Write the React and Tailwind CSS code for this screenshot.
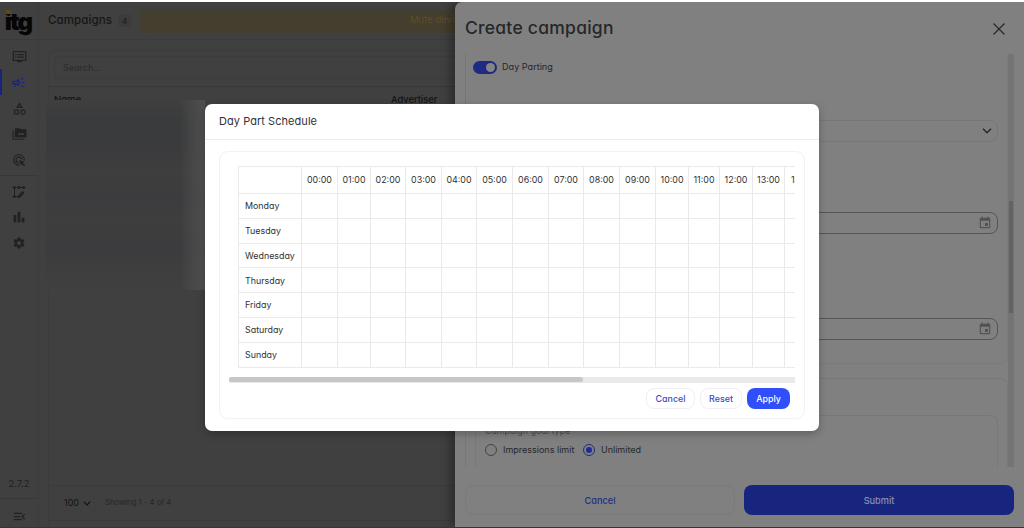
import React from "react";
import {
  MdOutlineDvr,
  MdOutlineCampaign,
  MdOutlineCategory,
  MdAdsClick,
  MdBarChart,
  MdSettings,
  MdMenuOpen,
  MdEvent,
} from "react-icons/md";

const HOURS = ["00:00", "01:00", "02:00", "03:00", "04:00", "05:00", "06:00", "07:00", "08:00", "09:00", "10:00", "11:00", "12:00", "13:00", "14:00"];
const DAYS = ["Monday", "Tuesday", "Wednesday", "Thursday", "Friday", "Saturday", "Sunday"];
const COLS =
  "grid grid-cols-[63px_36px_33px_35px_36px_35px_36px_36px_35px_36px_36px_33px_31px_33px_32px_36px]";

function Chevron({ className }) {
  return (
    <svg viewBox="0 0 10 6" className={className} fill="none" stroke="currentColor" strokeWidth="1.4">
      <path d="M1 .8 5 4.8 9 .8" />
    </svg>
  );
}

function PathEdit() {
  return (
    <svg viewBox="0 0 14 14" className="size-[14px]" fill="currentColor">
      <path d="M2.5 3v8M3 2.5h8.5M3 11.5h3" fill="none" stroke="currentColor" strokeWidth="1" />
      <circle cx="2.3" cy="2.4" r="1.5" />
      <circle cx="7" cy="2.5" r="1.4" />
      <circle cx="11.7" cy="2.4" r="1.5" />
      <circle cx="2.3" cy="11.6" r="1.5" />
      <path d="M5.6 13v-2l5-5 2 2-5 5z" />
    </svg>
  );
}

function MediaFolders() {
  return (
    <svg viewBox="0 0 24 24" className="h-[14px] w-[15px]" fill="currentColor">
      <path d="M2 6H0v14c0 1.100.9 2 2 2h18v-2H2z" />
      <path
        fillRule="evenodd"
        d="M22 4h-8l-2-2H6c-1.100 0-2 .9-2 2v12c0 1.100.9 2 2 2h16c1.100 0 2-.9 2-2V6c0-1.100-.9-2-2-2zM9 13.500l3-4 2.300 2.800L17.500 9l3 4.500z"
      />
    </svg>
  );
}

function Sidebar() {
  const item = "flex h-[26px] w-full items-center justify-center";
  return (
    <nav className="flex w-[39px] shrink-0 flex-col border-r border-[#3c3c3c] text-[#212121]">
      <div className="flex h-[38px] items-center justify-center border-b border-[#3a3a3a]">
        <div className="relative mt-[4px] ml-[-2px] h-[25px] text-[24px] leading-[23px] font-black tracking-[-1.8px] text-[#060606]">
          itg
          <span className="absolute top-[0px] left-[1px] h-[4px] w-[5px] bg-[#5b4a1c]" />
        </div>
      </div>
      <div className="flex flex-col pt-[3px]">
        <div className={item}><MdOutlineDvr className="size-[15px]" /></div>
        <div className="flex h-[26px] w-full items-center border-l-2 border-[#19257c] text-[#19257c]">
          <MdOutlineCampaign className="ml-[9px] size-[15px]" />
        </div>
        <div className={item}><MdOutlineCategory className="size-[15px]" /></div>
        <div className={item}><MediaFolders /></div>
        <div className={item}><MdAdsClick className="size-[14px]" /></div>
        <div className="mt-[2px] flex h-[29px] items-end justify-center border-t border-[#383838] pb-[5px]"><PathEdit /></div>
        <div className={item}><MdBarChart className="size-[16px]" /></div>
        <div className={item}><MdSettings className="size-[14px]" /></div>
      </div>
      <div className="mt-auto flex h-[27px] items-center justify-center border-b border-[#383838] pb-[1px] text-[9.5px]">2.7.2</div>
      <div className="flex h-[28px] items-center justify-center pt-[6px]"><MdMenuOpen className="size-[15px]" /></div>
    </nav>
  );
}

function CampaignList() {
  return (
    <main className="flex w-[416px] shrink-0 flex-col overflow-hidden">
      <header className="flex h-[38px] shrink-0 items-center border-b border-[#3b3b3b] pl-[9px]">
        <h1 className="text-[11.5px] font-medium tracking-[0.1px] text-[#161616]">Campaigns</h1>
        <span className="ml-[6px] flex h-[13px] w-[13px] items-center justify-center rounded bg-[#3b3b3b] text-[8px] text-[#1c1c1c]">4</span>
        <div className="ml-[9px] flex h-[24px] flex-1 items-center overflow-hidden rounded-l-md bg-[#433e2e] pl-[270px] text-[9.5px] whitespace-nowrap text-[#614d23]">
          Mute devi
        </div>
      </header>
      <section className="mt-[10px] ml-[9px] flex flex-1 flex-col rounded-tl-lg border-t border-l border-[#3c3c3c]">
        <div className="mt-[5px] ml-[5px] flex h-[23px] items-center rounded-l-md border border-r-0 border-[#3c3c3c] pl-[8px] text-[9px] text-[#2a2a2a]">
          Search...
        </div>
        <div className="mt-[7px] flex h-[14px] border-t border-[#373737] pt-[5px] pl-[5px] text-[9.5px] leading-[15px] font-medium text-[#131313]">
          <span className="h-[8px] w-[337px] overflow-hidden">Name</span>
          <span className="text-[9.3px]">Advertiser</span>
        </div>
        <div className="-ml-[3px] h-[190px] w-[159px] shrink-0 bg-[linear-gradient(180deg,#3f3f3f_0px,#3a3b3c_20px,#3b3b3d_48px,#3e3e3e_70px,#3c3c3f_98px,#3e3e3e_118px,#3c3c3e_150px,#404040_190px)]">
          <div className="h-full bg-[linear-gradient(90deg,transparent_84%,#505050_100%)]" />
        </div>
        <footer className="mt-auto mb-[6px] flex h-[36px] items-center border-y border-[#3b3b3b] pl-[8px]">
          <div className="flex h-[23px] w-[38px] items-center gap-[4px] rounded-md border border-[#3e3e3e] pl-[6px] text-[9px] text-[#141414]">
            100 <Chevron className="h-[5px] w-[8px] shrink-0" />
          </div>
          <span className="ml-[10px] text-[7.7px] text-[#262626]">Showing 1 - 4 of 4</span>
        </footer>
      </section>
    </main>
  );
}

function DateField() {
  return (
    <div className="flex h-[22px] items-center justify-end rounded-lg border border-[#555] pr-[5px]">
      <MdEvent className="size-[14px] text-[#525252]" />
    </div>
  );
}

function Drawer() {
  return (
    <aside className="flex w-[569px] shrink-0 flex-col rounded-tl-[7px] bg-[#808080] text-[#26272a] shadow-[-5px_0_10px_rgba(0,0,0,0.3)]">
      <header className="flex h-[52px] items-center justify-between pt-[1px] pr-[19px] pl-[10px]">
        <h2 className="text-[17.5px] font-medium tracking-[0.25px]">Create campaign</h2>
        <svg viewBox="0 0 12 12" className="size-[12px]" fill="none" stroke="currentColor" strokeWidth="1.2">
          <path d="m.5.5 11 11M11.5.5l-11 11" />
        </svg>
      </header>
      <div className="flex h-[413px] pr-[10px] pl-[10px]">
        <div className="flex flex-1 flex-col">
          <div className="flex h-[310px] flex-col rounded-b-lg border border-t-0 border-[#7b7b7b] border-l-[#757575] pr-[9px] pl-[7px]">
            <div className="flex h-[26px] items-center gap-[5px] text-[9.1px]">
              <span className="flex h-[13px] w-[24px] items-center justify-end rounded-full bg-[#1e2a84] pr-[2px]">
                <span className="size-[9px] rounded-full bg-[#858585]" />
              </span>
              Day Parting
            </div>
            <div className="mt-[40px] flex h-[22px] items-center justify-end rounded-lg border border-[#777] pr-[5px]">
              <Chevron className="h-[6px] w-[10px]" />
            </div>
            <div className="mt-[70px]"><DateField /></div>
            <div className="mt-[84px]"><DateField /></div>
          </div>
          <div className="mt-[14px] flex flex-1 flex-col rounded-t-lg border border-b-0 border-[#787878] pt-[36px] pr-[9px] pl-[9px]">
            <div className="flex-1 rounded-t-lg border border-b-0 border-[#787878] px-[9px] pt-[9px]">
              <div className="text-[8.5px] leading-[13px] tracking-[0.2px] text-[#4d4d4d]">Campaign goal type</div>
              <div className="mt-[4px] flex items-center text-[9px] leading-[15px]">
                <span className="mr-[6px] size-[12px] rounded-full border border-[#444]" />
                <span className="w-[80px]">Impressions limit</span>
                <span className="mr-[6px] flex size-[12px] items-center justify-center rounded-full border-[1.5px] border-[#1e2a8c]">
                  <span className="size-[6px] rounded-full bg-[#1e2a8c]" />
                </span>
                <span>Unlimited</span>
              </div>
            </div>
          </div>
        </div>
        <div className="flex w-[6px] flex-col bg-[#747474]">
          <div className="mt-[147px] ml-[1px] h-[112px] w-[4px] bg-[#616366]" />
        </div>
      </div>
      <footer className="mt-[18px] flex h-[30px] gap-[9px] pr-[10px] pl-[10px] text-[9.2px] font-medium">
        <div className="flex w-[270px] items-center justify-center rounded-lg border border-[#7a7a7a] pt-[1px] text-[#222d84]">Cancel</div>
        <div className="flex flex-1 items-center justify-center rounded-lg bg-[#18257e] pt-[1px] text-[#8b90b5]">Submit</div>
      </footer>
    </aside>
  );
}

function ScheduleDialog() {
  return (
    <div className="absolute top-[102px] left-[205px] flex h-[327px] w-[614px] flex-col rounded-[7px] bg-white text-[#303136] shadow-[0_3px_8px_rgba(0,0,0,0.25)]">
      <header className="flex h-[36px] items-center border-b border-[#ececec] pl-[14px] text-[11px] tracking-[0.05px]">Day Part Schedule</header>
      <div className="mx-[14px] mt-[11px] flex h-[268px] flex-col rounded-[9px] border border-[#f2f2f2] pr-[9px] pl-[9px]">
        <div className="h-[231px] overflow-hidden pt-[14px] pl-[9px]">
          <div className="w-max border-t border-l border-[#eaeaeb] text-[8.9px]">
            <div className={`${COLS} h-[27px] [&>*]:border-r [&>*]:border-b [&>*]:border-[#eaeaeb]`}>
              <div />
              {HOURS.map((h) => (
                <div key={h} className="flex items-center justify-center">{h}</div>
              ))}
            </div>
            {DAYS.map((d) => (
              <div key={d} className={`${COLS} h-[24.8px] [&>*]:border-r [&>*]:border-b [&>*]:border-[#eaeaeb]`}>
                <div className="flex items-center pl-[6px]">{d}</div>
                {HOURS.map((h) => (
                  <div key={h} />
                ))}
              </div>
            ))}
          </div>
        </div>
        <div className="mt-[-6px] h-[6px] shrink-0 bg-[#e9e9ea]">
          <div className="h-[5px] w-[354px] rounded-sm bg-[#c6c7c9]" />
        </div>
        <div className="mt-[5px] flex h-[21px] shrink-0 justify-end gap-[5px] pr-[5px] text-[8.9px] font-medium text-[#3a4cc6]">
          <button className="w-[49px] rounded-[8px] border border-[#efeff4]">Cancel</button>
          <button className="w-[42px] rounded-[8px] border border-[#efeff4]">Reset</button>
          <button className="w-[43px] rounded-[8px] bg-[#304ffb] text-white">Apply</button>
        </div>
      </div>
    </div>
  );
}

export default function App() {
  return (
    <div className="h-[528px] w-[1024px] overflow-hidden bg-white pt-[2px] font-[Inter,sans-serif] [font-feature-settings:'cv11']">
      <div className="relative flex h-[526px] overflow-hidden border-b border-[#373336] bg-[#404040]">
        <Sidebar />
        <CampaignList />
        <Drawer />
        <ScheduleDialog />
      </div>
    </div>
  );
}
